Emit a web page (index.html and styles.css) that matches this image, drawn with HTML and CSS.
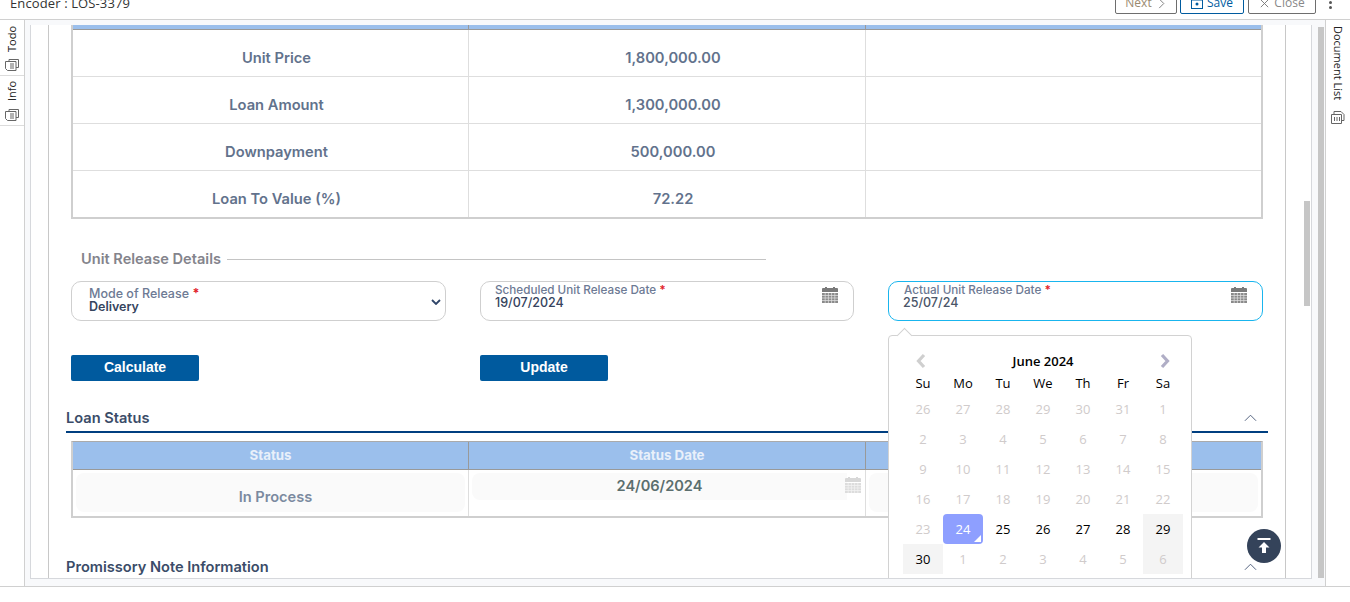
FILE: index.html
```html
<!DOCTYPE html>
<html lang="en">
<head>
<meta charset="utf-8">
<title>Encoder : LOS-3379</title>
<link rel="stylesheet" href="styles.css">
</head>
<body>
<div class="app">
  <header class="topbar">
    <div class="encoder">Encoder : LOS-3379</div>
    <div class="actions">
      <button class="btn btn-next">Next <svg class="ico-s" viewBox="0 0 12 12"><path d="M3.500 1l5 5-5 5" fill="none" stroke="#777" stroke-width="1"/></svg></button>
      <button class="btn btn-save"><svg class="ico-save" viewBox="0 0 12 12"><rect x=".5" y=".5" width="11" height="11" fill="none" stroke="#005b9f"/><path d="M.5 3h11" stroke="#005b9f"/><circle cx="6" cy="7" r="1.500" fill="#005b9f"/></svg> Save</button>
      <button class="btn btn-close"><svg class="ico-s" viewBox="0 0 12 12"><path d="M2 2l8 8M10 2l-8 8" stroke="#777" stroke-width="1"/></svg> Close</button>
      <span class="dots"><i></i><i></i></span>
    </div>
  </header>
  <div class="middle">
    <aside class="rail rail-left">
      <div class="rail-tab tab-todo">
        <span class="rail-text up">Todo</span>
        <svg class="rail-ico" viewBox="0 0 14 13"><path d="M4 3V1.500h9.500v8H11" fill="none" stroke="#666"/><path d="M.5 3.500h10.500v9H2.500L.5 10.500z" fill="none" stroke="#666"/><path d="M5 6h4M5 8h4M5 10h4" stroke="#666"/></svg>
      </div>
      <div class="rail-tab tab-info">
        <span class="rail-text up">Info</span>
        <svg class="rail-ico" viewBox="0 0 14 13"><path d="M4 3V1.500h9.500v8H11" fill="none" stroke="#666"/><path d="M.5 3.500h10.500v9H2.500L.5 10.500z" fill="none" stroke="#666"/><path d="M5 6h4M5 8h4M5 10h4" stroke="#666"/></svg>
      </div>
    </aside>
    <main class="center">
      <div class="panel">
        <div class="inner">
          <div class="grid-table first">
            <div class="grid-head stub"><span></span><span></span><span></span></div>
            <div class="grid-row"><span class="cell">Unit Price</span><span class="cell">1,800,000.00</span><span class="cell"></span></div>
            <div class="grid-row"><span class="cell">Loan Amount</span><span class="cell">1,300,000.00</span><span class="cell"></span></div>
            <div class="grid-row"><span class="cell">Downpayment</span><span class="cell">500,000.00</span><span class="cell"></span></div>
            <div class="grid-row last"><span class="cell">Loan To Value (%)</span><span class="cell">72.22</span><span class="cell"></span></div>
          </div>

          <div class="legend"><span>Unit Release Details</span><i></i></div>

          <div class="form-row">
            <div class="field select">
              <div class="lbl">Mode of Release <b>*</b></div>
              <div class="val">Delivery</div>
              <svg class="chev" viewBox="0 0 10 6"><path d="M1 1l4 4 4-4" fill="none" stroke="#2f4468" stroke-width="1.800"/></svg>
            </div>
            <div class="field date">
              <div class="lbl">Scheduled Unit Release Date <b>*</b></div>
              <div class="val">19/07/2024</div>
              <svg class="cal" viewBox="0 0 16 17"><path d="M0 3a1 1 0 0 1 1-1h2V1h2v1h6V1h2v1h2a1 1 0 0 1 1 1v3H0z" fill="#7a7a7a"/><path d="M0 7h16v10H0z" fill="#8a8a8a"/><path d="M0 9.500h16M0 12h16M0 14.500h16M3.200 7v10M6.400 7v10M9.600 7v10M12.800 7v10" stroke="#e4e4e4" stroke-width=".7"/></svg>
            </div>
            <div class="date-wrap">
              <div class="field date focus">
                <div class="lbl">Actual Unit Release Date <b>*</b></div>
                <div class="val">25/07/24</div>
                <svg class="cal" viewBox="0 0 16 17"><path d="M0 3a1 1 0 0 1 1-1h2V1h2v1h6V1h2v1h2a1 1 0 0 1 1 1v3H0z" fill="#7a7a7a"/><path d="M0 7h16v10H0z" fill="#8a8a8a"/><path d="M0 9.500h16M0 12h16M0 14.500h16M3.200 7v10M6.400 7v10M9.600 7v10M12.800 7v10" stroke="#e4e4e4" stroke-width=".7"/></svg>
              </div>
              <div class="picker">
                <div class="pick-head">
                  <svg class="nav" viewBox="0 0 12 16"><path d="M9 2L3.500 8 9 14" fill="none" stroke="#cfcfcf" stroke-width="3.200"/></svg>
                  <strong>June 2024</strong>
                  <svg class="nav" viewBox="0 0 12 16"><path d="M3 2l5.500 6L3 14" fill="none" stroke="#b0aec6" stroke-width="3.200"/></svg>
                </div>
                <div class="days dow"><span>Su</span><span>Mo</span><span>Tu</span><span>We</span><span>Th</span><span>Fr</span><span>Sa</span></div>
                <div class="days dates">
                  <span>26</span><span>27</span><span>28</span><span>29</span><span>30</span><span>31</span><span>1</span>
                  <span>2</span><span>3</span><span>4</span><span>5</span><span>6</span><span>7</span><span>8</span>
                  <span>9</span><span>10</span><span>11</span><span>12</span><span>13</span><span>14</span><span>15</span>
                  <span>16</span><span>17</span><span>18</span><span>19</span><span>20</span><span>21</span><span>22</span>
                  <span>23</span><span class="sel">24</span><span class="on">25</span><span class="on">26</span><span class="on">27</span><span class="on">28</span><span class="on wk">29</span>
                  <span class="on wk">30</span><span>1</span><span>2</span><span>3</span><span>4</span><span>5</span><span class="wk">6</span>
                </div>
              </div>
            </div>
          </div>

          <div class="form-row buttons">
            <div><button class="primary">Calculate</button></div>
            <div><button class="primary">Update</button></div>
            <div></div>
          </div>

          <div class="section">
            <span>Loan Status</span>
            <svg class="up-chev" viewBox="0 0 14 8"><path d="M1 7l6-6 6 6" fill="none" stroke="#4a5a78" stroke-width="1"/></svg>
          </div>

          <div class="grid-table status">
            <div class="grid-head"><span>Status</span><span>Status Date</span><span></span></div>
            <div class="grid-row last">
              <div class="s-cell"><div class="ghost tall">In Process</div></div>
              <div class="s-cell"><div class="ghost short">24/06/2024</div>
                <svg class="cal faint" viewBox="0 0 16 17"><path d="M0 3a1 1 0 0 1 1-1h2V1h2v1h6V1h2v1h2a1 1 0 0 1 1 1v3H0z" fill="#d8d8d8"/><path d="M0 7h16v10H0z" fill="#dcdcdc"/><path d="M0 9.500h16M0 12h16M0 14.500h16M3.200 7v10M6.400 7v10M9.600 7v10M12.800 7v10" stroke="#f4f4f4" stroke-width=".7"/></svg>
              </div>
              <div class="s-cell"><div class="ghost tall"></div></div>
            </div>
          </div>

          <div class="section plain">
            <span>Promissory Note Information</span>
            <svg class="up-chev" viewBox="0 0 14 8"><path d="M1 7l6-6 6 6" fill="none" stroke="#4a5a78" stroke-width="1"/></svg>
          </div>
        </div>
        <div class="thumb"></div>
        <button class="to-top" aria-label="Back to top"><svg viewBox="0 0 18 18"><path d="M2.500 2h13" stroke="#fff" stroke-width="2"/><path d="M9 5l5.500 5.500H11V16H7v-5.500H3.500z" fill="#fff"/></svg></button>
      </div>
      <div class="outer-thumb"></div>
    </main>
    <aside class="rail rail-right">
      <span class="rail-text down">Document List</span>
      <svg class="rail-ico doc" viewBox="0 0 14 13"><path d="M3 3V.5h7l3 3V9.500h-2M.5 3.500h10v9H.5z" fill="none" stroke="#666"/><path d="M3.500 6v4M6 6v4M8.500 6v4" stroke="#666"/></svg>
    </aside>
  </div>
  <footer class="foot"></footer>
</div>
</body>
</html>
```
FILE: styles.css
```css
* { box-sizing: border-box; }
html, body { margin: 0; height: 100%; overflow: hidden; background: #fff; }
body { font-family: Inter, "Liberation Sans", sans-serif; color: #5b6b85; }
.app { width: 1350px; height: 602px; display: flex; flex-direction: column; }

.topbar { height: 20px; flex: none; border-bottom: 1px solid #d0d0d0; display: flex; justify-content: space-between; align-items: flex-end; padding: 0 17px 0 10px; overflow: hidden; }
.encoder { font: 13px/18px "Open Sans", sans-serif; letter-spacing: .12px; color: #333; margin-bottom: 7px; }
.actions { display: flex; align-items: flex-end; margin-bottom: 5px; }
.btn { height: 22px; background: #fff; border: 1px solid #6e6e6e; border-radius: 2px; font: 12px/20px "Open Sans", sans-serif; color: #888; padding: 0; display: flex; align-items: center; justify-content: center; gap: 4px; }
.btn-next { width: 62px; margin-right: 3px; color: #9a8a70; }
.btn-save { width: 64px; margin-right: 4px; border-color: #005b9f; color: #005b9f; }
.btn-close { width: 68px; margin-right: 13px; }
.ico-s { width: 11px; height: 11px; }
.ico-save { width: 12px; height: 12px; }
.dots { width: 4px; height: 8px; margin-bottom: 5px; display: flex; flex-direction: column; justify-content: space-between; }
.dots i { width: 3px; height: 3px; background: #555; border-radius: 50%; }

.middle { flex: none; height: 566px; display: flex; }
.rail { flex: none; background: #fff; display: flex; flex-direction: column; align-items: center; }
.rail-left { width: 25px; border-right: 1px solid #d0d0d0; }
.rail-right { width: 25px; border-left: 1px solid #d0d0d0; padding-top: 6px; }
.rail-tab { width: 100%; border-bottom: 1px solid #dcdcdc; display: flex; flex-direction: column; align-items: center; }
.tab-todo { height: 56px; padding-top: 6px; }
.tab-info { height: 50px; padding-top: 5px; }
.rail-text { font: 11px/16px "Open Sans", sans-serif; color: #222; writing-mode: vertical-rl; }
.rail-text.up { transform: rotate(180deg); text-align: right; }
.tab-todo .rail-text { height: 32px; }
.tab-info .rail-text { height: 27px; }
.rail-ico { width: 14px; height: 13px; flex: none; }
.rail-ico.doc { margin-top: 11px; }

.center { flex: none; width: 1300px; background: #f8f9fb; padding: 5px 13px 7px 5px; position: relative; }
.outer-thumb { position: absolute; left: 1293px; top: 7px; width: 6px; height: 551px; background: #c6c6c6; }
.panel { height: 100%; background: #fff; border: 1px solid #d6d8dc; border-top: 0; padding: 0 25px 0 17px; display: flex; position: relative; overflow: hidden; }
.inner { width: 1238px; flex: none; border-left: 1px solid #c8c8c8; border-right: 1px solid #c8c8c8; padding: 0 22px; }
.thumb { position: absolute; left: 1273px; top: 176px; width: 6px; height: 105px; background: #c6c6c6; }

.grid-table { width: 1192px; border-left: 2px solid #cfcfcf; border-right: 2px solid #cfcfcf; border-bottom: 2px solid #cfcfcf; }
.grid-head { display: grid; grid-template-columns: 396px 397px 1fr; background: #9bbfec; border-bottom: 1px solid #999; }
.grid-head.stub { height: 5px; }
.grid-head span { text-align: center; border-right: 1px solid #999; font-size: 13.300px; font-weight: 700; line-height: 27px; color: #e9f0fa; }
.grid-head span:last-child { border-right: 0; }
.grid-row { display: grid; grid-template-columns: 396px 397px 1fr; height: 47px; border-bottom: 1px solid #dedede; }
.grid-row.last { border-bottom: 0; height: 46px; }
.cell { border-right: 1px solid #dedede; font-size: 14.700px; font-weight: 600; display: flex; align-items: center; justify-content: center; padding: 9px 0 0 12px; color: #62728c; }
.cell:last-child { border-right: 0; }

.legend { height: 20px; margin: 29px 0 13px; padding: 1px 0 0 10px; display: flex; align-items: center; width: 695px; color: #84848c; font-size: 14.600px; font-weight: 600; gap: 6px; }
.legend i { flex: 1; height: 1px; margin-top: 1px; background: #c4c4c4; }

.form-row { display: grid; grid-template-columns: 375px 374px 375px; column-gap: 34px; }
.buttons { margin-top: 34px; }
.date-wrap { position: relative; }
.field { height: 40px; border: 1px solid #cfcfcf; border-radius: 10px; position: relative; }
.field.focus { border-color: #19b5ee; }
.lbl { font-size: 11.700px; line-height: 12px; font-weight: 500; color: #6d7a94; }
.lbl b { color: #e2242c; font-weight: 700; }
.val { font-size: 12.500px; line-height: 13px; font-weight: 500; color: #36445e; }
.select { padding: 6px 17px 0; }
.select .lbl { font-size: 12.500px; }
.select .val { font-weight: 600; }
.date { padding: 2px 14px; }
.focus .lbl { padding-left: 1px; }
.focus .val { color: #4a5568; }
.chev { position: absolute; right: 4px; top: 17px; width: 10px; height: 6px; }
.cal { position: absolute; right: 15px; top: 4px; width: 16px; height: 17px; }

.primary { width: 128px; height: 26px; background: #005a9e; border: 0; border-radius: 2px; color: #fff; font: 700 14px "Liberation Sans", sans-serif; padding: 0 0 2px; }

.section { margin: 27px -5px 8px; height: 25px; border-bottom: 2px solid #003f80; display: flex; justify-content: space-between; align-items: flex-start; font-size: 14.600px; font-weight: 600; line-height: 20px; color: #3b4c68; padding-right: 11px; }
.section.plain { border-bottom: 0; margin-top: 39px; }
.up-chev { width: 13px; height: 8px; margin-top: 6px; }

.status { border-top: 1px solid #aaa; }
.s-cell { border-right: 1px solid #dedede; padding: 3px; position: relative; }
.s-cell:last-child { border-right: 0; }
.ghost { background: #fafafa; border-radius: 8px; text-align: center; font-size: 14.600px; font-weight: 600; }
.tall { height: 39px; line-height: 48px; color: #7b8aa0; padding-left: 10px; }
.short { height: 27px; line-height: 27px; color: #5b6e6e; width: 375px; border-radius: 8px 0 0 8px; }
.cal.faint { right: 4px; top: 6px; }

.picker { position: absolute; left: 0; top: 54px; width: 304px; height: 260px; background: #fff; border: 1px solid #d2d2d2; border-radius: 4px; padding: 11px 8px 0 14px; z-index: 5; }
.picker::before { content: ""; position: absolute; left: 10px; top: -6px; width: 10px; height: 10px; background: #fff; border-left: 1px solid #d2d2d2; border-top: 1px solid #d2d2d2; transform: rotate(45deg); }
.pick-head { height: 28px; width: 280px; display: flex; align-items: center; justify-content: space-between; padding: 0 12px; font: 600 13px "Open Sans", sans-serif; color: #000; }
.pick-head strong { font-weight: 600; }
.nav { width: 12px; height: 16px; }
.days { display: grid; grid-template-columns: repeat(7, 40px); font: 13px "Open Sans", sans-serif; text-align: center; }
.dow { height: 17px; line-height: 17px; color: #000; }
.dates { margin-top: 2px; grid-auto-rows: 30px; line-height: 30px; color: #d0cbcb; }
.dates .on { color: #000; }
.dates .wk { background: #f4f4f4; }
.dates .sel { background: #8e9fff; color: #fff; border-radius: 4px; position: relative; }
.sel::after { content: ""; position: absolute; right: 2px; bottom: 2px; border-left: 7px solid transparent; border-bottom: 7px solid #fff; }

.to-top { position: absolute; left: 1216px; top: 504px; width: 34px; height: 34px; border: 0; border-radius: 50%; background: #34435a; padding: 8px; z-index: 6; display: flex; }
.to-top svg { width: 18px; height: 18px; }

.foot { flex: 1; border-top: 1px solid #d0d0d0; }
```
